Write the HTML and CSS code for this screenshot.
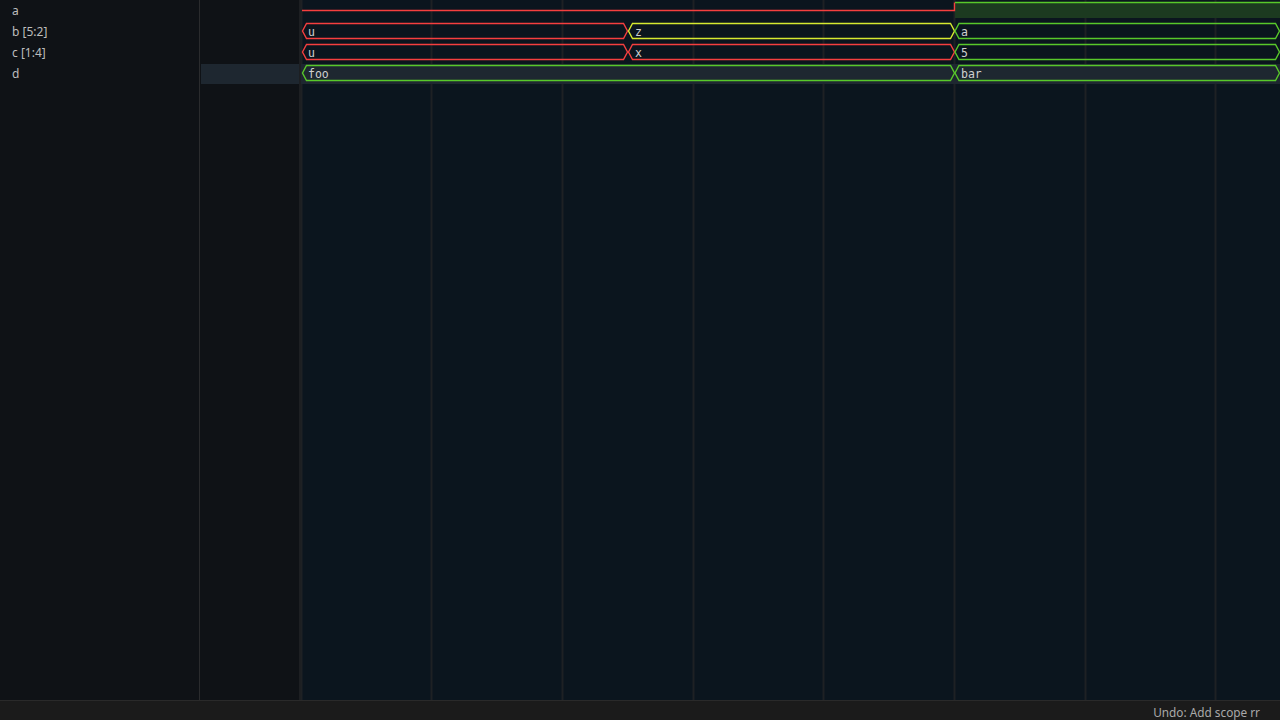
FILE: index.html
```html
<!DOCTYPE html>
<html>
<head>
<meta charset="utf-8">
<link rel="stylesheet" href="styles.css">
</head>
<body>
<div class="app">
  <div class="main">
    <div class="names">
      <div class="row">a</div>
      <div class="row">b [5:2]</div>
      <div class="row">c [1:4]</div>
      <div class="row">d</div>
    </div>
    <div class="values">
      <div class="vrow"></div>
      <div class="vrow"></div>
      <div class="vrow"></div>
      <div class="vrow selected"></div>
    </div>
    <div class="wave">
      <svg class="canvas" width="979" height="700" viewBox="0 0 979 700">
        <g class="grid">
          <line x1="0.5" y1="0" x2="0.5" y2="700"/>
          <line x1="130.5" y1="0" x2="130.5" y2="700"/>
          <line x1="261.5" y1="0" x2="261.5" y2="700"/>
          <line x1="392.5" y1="0" x2="392.5" y2="700"/>
          <line x1="522.5" y1="0" x2="522.5" y2="700"/>
          <line x1="653.5" y1="0" x2="653.5" y2="700"/>
          <line x1="784.5" y1="0" x2="784.5" y2="700"/>
          <line x1="914.5" y1="0" x2="914.5" y2="700"/>
        </g>
        <rect class="sel" x="0" y="64" width="979" height="20"/>
        <!-- a -->
        <rect class="hifill" x="654" y="2" width="325" height="16"/>
        <polyline class="red" points="1,10.5 653.5,10.5 653.5,2.5"/>
        <polyline class="green" points="654,2.5 979,2.5"/>
        <!-- b -->
        <polygon class="red" points="1.5,31 5.5,23.5 322.5,23.5 326.5,31 322.5,38.5 5.5,38.5"/>
        <polygon class="yellow" points="327.5,31 331.5,23.5 649.5,23.5 653.5,31 649.5,38.5 331.5,38.5"/>
        <polygon class="green" points="654,31 658,23.5 974.5,23.5 978.5,31 974.5,38.5 658,38.5"/>
        <text x="7" y="36">u</text>
        <text x="334" y="36">z</text>
        <text x="660" y="36">a</text>
        <!-- c -->
        <polygon class="red" points="1.5,52 5.5,44.5 322.5,44.5 326.5,52 322.5,59.5 5.5,59.5"/>
        <polygon class="red" points="327.5,52 331.5,44.5 649.5,44.5 653.5,52 649.5,59.5 331.5,59.5"/>
        <polygon class="green" points="654,52 658,44.5 974.5,44.5 978.5,52 974.5,59.5 658,59.5"/>
        <text x="7" y="57">u</text>
        <text x="334" y="57">x</text>
        <text x="660" y="57">5</text>
        <!-- d -->
        <polygon class="green" points="1.5,73 5.5,65.5 649.5,65.5 653.5,73 649.5,80.5 5.5,80.5"/>
        <polygon class="green" points="654,73 658,65.5 974.5,65.5 978.5,73 974.5,80.5 658,80.5"/>
        <text x="7" y="78">foo</text>
        <text x="660" y="78">bar</text>
      </svg>
    </div>
  </div>
  <div class="status">Undo: Add scope rr</div>
</div>
</body>
</html>
```

FILE: styles.css
```css
html, body {
  margin: 0;
  padding: 0;
  width: 1280px;
  height: 720px;
  overflow: hidden;
  background: #0f1216;
}

.app {
  display: flex;
  flex-direction: column;
  width: 1280px;
  height: 720px;
  font-family: "Noto Sans", "Open Sans", sans-serif;
}

.main {
  display: flex;
  height: 700px;
}

.names {
  width: 199px;
  border-right: 1px solid #2a2b2d;
  background: #0f1216;
}

.row {
  height: 21px;
  line-height: 21px;
  padding-left: 12px;
  font-size: 12px;
  color: #bdbdbd;
}

.values {
  width: 98px;
  padding-left: 1px;
  border-right: 2px solid #1d1f22;
  background: #0f1216;
}

.vrow {
  height: 21px;
}

.vrow.selected {
  margin-top: 1px;
  height: 20px;
  background: #1e2730;
}

.wave {
  width: 979px;
  height: 700px;
  background: #0b151e;
}

.canvas {
  display: block;
}

.grid line {
  stroke: #1e2124;
  stroke-width: 2;
}

.sel {
  fill: #1e2730;
}

.hifill {
  fill: #1c3a20;
}

.red, .yellow, .green {
  fill: none;
  stroke-width: 1.4;
  stroke-linejoin: miter;
}

.red { stroke: #f53f3f; }
.yellow { stroke: #d6ea30; }
.green { stroke: #58c82a; }

.canvas text {
  font-family: "DejaVu Sans Mono", "Liberation Mono", monospace;
  font-size: 11.5px;
  fill: #cfcfcf;
}

.status {
  height: 19px;
  border-top: 1px solid #2a2a2a;
  background: #1b1b1b;
  color: #a9a9a9;
  font-size: 11.8px;
  line-height: 22px;
  text-align: right;
  padding-right: 20px;
}
```
